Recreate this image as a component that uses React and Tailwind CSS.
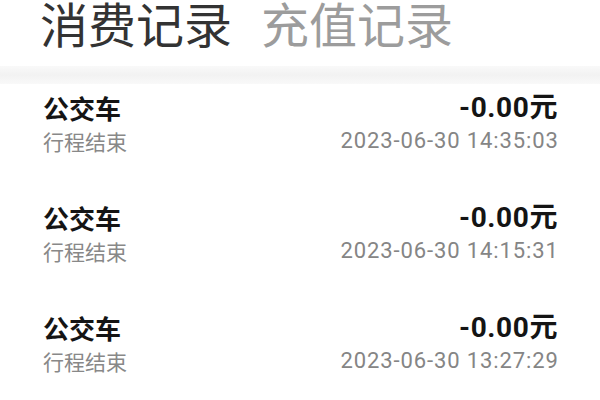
import React from "react";

const rows = [
  { time: "2023-06-30 14:35:03" },
  { time: "2023-06-30 14:15:31" },
  { time: "2023-06-30 13:27:29" },
];

export default function App() {
  return (
    <div
      className="w-[600px] h-[400px] bg-white overflow-hidden"
      style={{ fontFamily: '"Noto Sans CJK SC", Roboto, sans-serif' }}
    >
      <div className="h-[66px] flex items-end gap-[29px] pl-[40px] pb-[20px]">
        <span className="text-[48px] leading-none text-[#333333]">消费记录</span>
        <span className="text-[48px] leading-none text-[#9c9c9c]">充值记录</span>
      </div>
      <div className="h-[18px] bg-gradient-to-b from-[#f9f9f9] via-[#f2f2f2] to-[#f9f9f9]" />
      <div className="flex flex-col pl-[43px] pr-[42px]">
        {rows.map((r, i) => (
          <div key={i} className="h-[110px] flex justify-between pt-[7px]">
            <div className="flex flex-col">
              <span className="text-[26px] leading-[34px] font-bold text-[#141414]">公交车</span>
              <span className="text-[21px] leading-[32px] text-[#888888]">行程结束</span>
            </div>
            <div className="flex flex-col items-end">
              <span
                className="text-[28px] leading-[34px] font-bold text-[#141414] tracking-[0.6px]"
                style={{ fontFamily: 'Roboto, "Noto Sans CJK SC", sans-serif' }}
              >
                -0.00元
              </span>
              <span
                className="text-[22px] leading-[32px] text-[#858585] tracking-[0.9px] -mr-[0.9px]"
                style={{ fontFamily: 'Roboto, "Noto Sans CJK SC", sans-serif' }}
              >
                {r.time}
              </span>
            </div>
          </div>
        ))}
      </div>
    </div>
  );
}
